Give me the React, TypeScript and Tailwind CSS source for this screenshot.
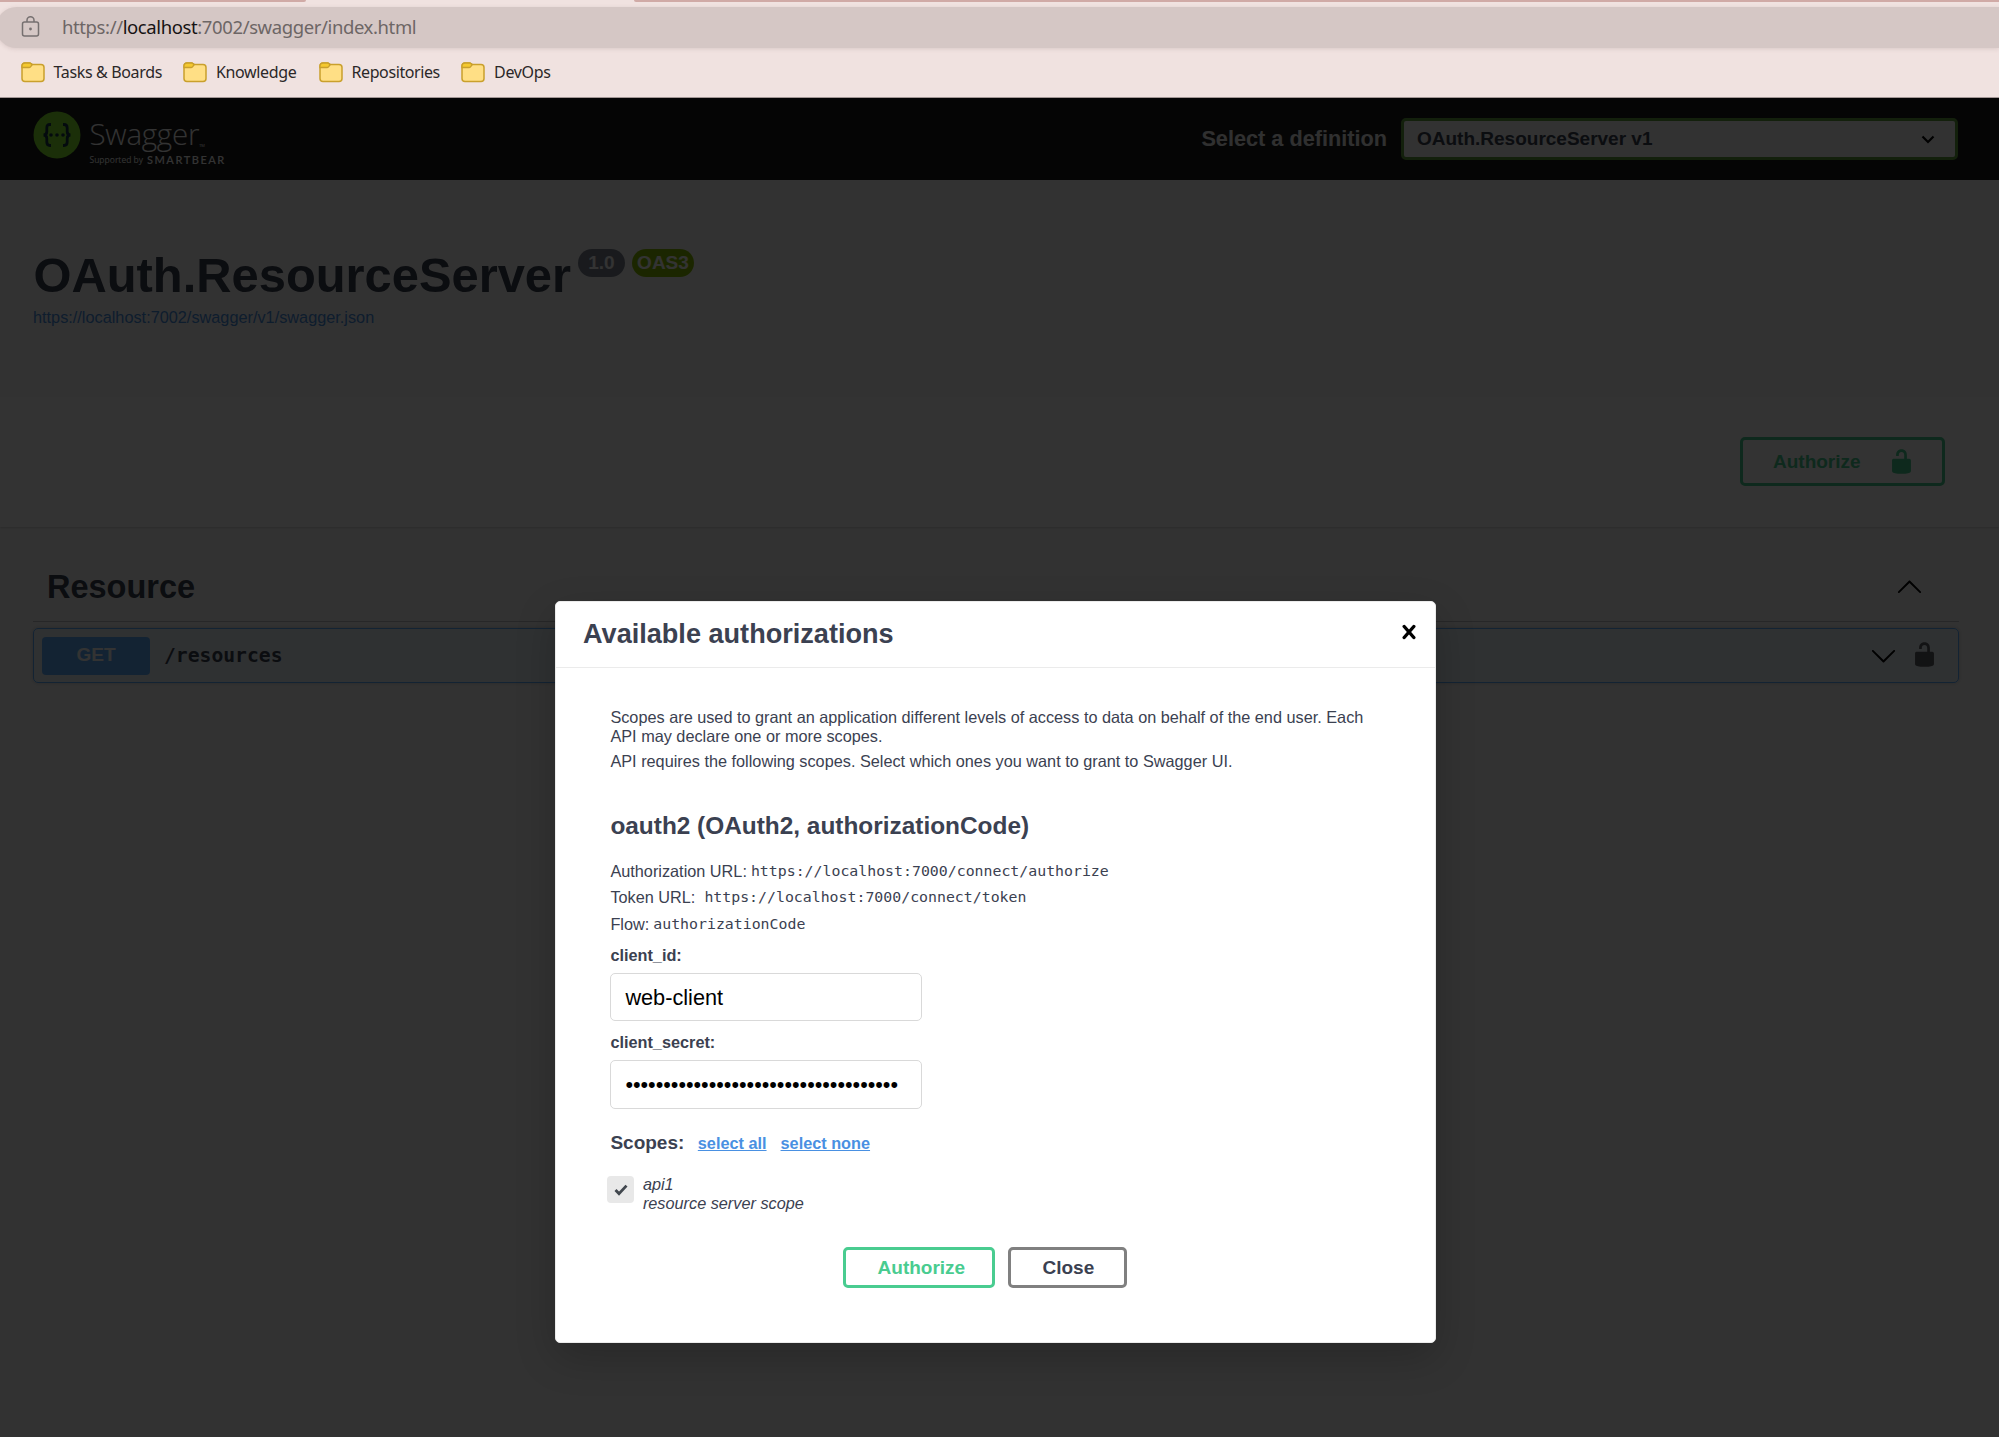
import React from "react";

const bookmarks = [
  { name: "Tasks & Boards", cls: "w-[108px] tracking-[-0.35px]" },
  { name: "Knowledge", cls: "w-[81px] tracking-[-0.35px]" },
  { name: "Repositories", cls: "w-[88px] tracking-[-0.4px]" },
  { name: "DevOps", cls: "w-[58px] tracking-[-0.3px]" },
];

function Folder() {
  return (
    <svg width="24" height="21" viewBox="0 0 24 21" className="shrink-0">
      <path d="M1 4a3 3 0 0 1 3-3h4.500a2 2 0 0 1 1.500 0.700L11.500 2.500H20a3 3 0 0 1 3 3v11a3 3 0 0 1-3 3H4a3 3 0 0 1-3-3z" fill="#ffdf85" stroke="#c9a02c" strokeWidth="1.500" />
      <path d="M1 4a3 3 0 0 1 3-3h4.500a2 2 0 0 1 1.500 0.700L11 3 9.500 4.800A2 2 0 0 1 8 5.500H1z" fill="#f5c92f" stroke="#c9a02c" strokeWidth="1.300" />
    </svg>
  );
}

function Unlock({ color }: { color: string }) {
  return (
    <svg width="27" height="27" viewBox="0 0 20 20" fill={color} className="shrink-0">
      <path d="M15.800 8H14V5.600C14 2.703 12.665 1 10 1 7.334 1 6 2.703 6 5.600V6h2v-.801C8 3.754 8.797 3 10 3c1.203 0 2 .754 2 2.199V8H4c-.553 0-1 .646-1 1.199V17c0 .549.428 1.139.951 1.307l1.197.387C5.672 18.861 6.550 19 7.100 19h5.800c.549 0 1.428-.139 1.951-.307l1.196-.387c.524-.167.953-.757.953-1.306V9.199C17 8.646 16.352 8 15.800 8z" />
    </svg>
  );
}

function Chevron({ up = false }: { up?: boolean }) {
  return (
    <svg width="27" height="27" viewBox="0 0 20 20" className={up ? "mb-[2px] rotate-180" : ""}>
      <path d="M17.418 6.109c.272-.268.709-.268.979 0s.271.701 0 .969l-7.908 7.830c-.270.268-.707.268-.979 0l-7.908-7.830c-.270-.268-.270-.701 0-.969s.709-.268.979 0L10 13.250l7.418-7.141z" />
    </svg>
  );
}

function BrowserChrome() {
  return (
    <div className="h-[98px] shrink-0 overflow-hidden border-b border-[#a39796] bg-[#f0e2e0] font-['Noto_Sans',sans-serif]">
      <div className="flex h-[7px] items-start justify-between">
        <div className="h-[2px] w-[306px] rounded-br bg-[#d0aaa6]" />
        <div className="h-[2px] w-[1365px] rounded-bl bg-[#d0aaa6]" />
      </div>
      <div className="-ml-1 flex h-[41px] items-center rounded-l-full bg-[#d5c7c5] pl-[25px] shadow-[0_1px_4px_rgba(120,90,90,0.18)]">
        <svg width="19" height="22" viewBox="0 0 19 22" fill="none" stroke="#767070" strokeWidth="1.500" className="mb-[2px]">
          <rect x="1.500" y="6" width="16" height="14" rx="2" />
          <path d="M6 6V4.300a3.500 3.500 0 0 1 7 0V6" />
          <circle cx="9.500" cy="13" r="1.400" fill="#767070" stroke="none" />
        </svg>
        <div className="mb-[2px] ml-[22px] whitespace-nowrap text-[18.500px] leading-6 tracking-[-0.39px] text-[#6d6665]">
          https://<span className="text-[#151313]">localhost</span>:7002/swagger/index.html
        </div>
      </div>
      <div className="flex h-[48px] items-center pl-[20.500px]">
        {bookmarks.map((b) => (
          <div key={b.name} className="mr-[21.500px] flex items-center">
            <Folder />
            <span className={`ml-[9px] whitespace-nowrap text-[16px] text-[#2b2828] ${b.cls}`}>{b.name}</span>
          </div>
        ))}
      </div>
    </div>
  );
}

function Logo() {
  return (
    <div className="flex pt-[13px]">
      <svg width="48" height="48" viewBox="0 0 48 48" className="shrink-0">
        <circle cx="24" cy="24" r="23.500" fill="#85ea2d" />
        <g fill="none" stroke="#173647" strokeWidth="2.800">
          <path d="M18 13.500h-1c-2.300 0-3.200 1-3.200 3.500v3.500c0 2.200-1 3.500-3.300 3.500 2.300 0 3.300 1.300 3.300 3.500V31c0 2.500.9 3.500 3.200 3.500h1" />
          <path d="M30 13.500h1c2.300 0 3.200 1 3.200 3.500v3.500c0 2.200 1 3.500 3.300 3.500-2.300 0-3.300 1.300-3.300 3.500V31c0 2.500-.9 3.500-3.200 3.500h-1" />
        </g>
        <g fill="#173647">
          <circle cx="18" cy="24" r="1.800" />
          <circle cx="24" cy="24" r="1.800" />
          <circle cx="30" cy="24" r="1.800" />
        </g>
      </svg>
      <div className="ml-[8.500px] whitespace-nowrap font-['Open_Sans',sans-serif] text-white">
        <div className="flex h-[42px] items-end">
          <span className="text-[29.500px] font-light leading-[38px] tracking-[-0.25px]">Swagger</span>
          <span className="mb-[4px] text-[4px] leading-[6px]">TM</span>
        </div>
        <div className="mt-px flex items-center leading-[12px]">
          <span className="text-[8.500px]">Supported by</span>
          <span className="ml-[4px] font-['Lato',sans-serif] text-[11px] font-semibold tracking-[1.5px]">SMARTBEAR</span>
        </div>
      </div>
    </div>
  );
}

function Page() {
  return (
    <div className="flex h-full flex-col bg-[#fafafa] text-[#3b4151]">
      <header className="flex h-[82px] shrink-0 justify-between bg-[#1b1b1b] pl-[33px] pr-[41px]">
        <Logo />
        <div className="flex items-start pt-[20px]">
          <span className="mr-[14px] mt-[7px] text-[21.700px] font-bold leading-[28px] text-[#f0f0f0]">Select a definition</span>
          <div className="flex h-[42px] w-[557px] items-center justify-between rounded-[5px] border-[3px] border-[#62a03f] bg-[#f7f7f7] pl-[13px] pr-[20px] text-[19px] font-bold">
            <span>OAuth.ResourceServer v1</span>
            <svg width="14" height="9" viewBox="0 0 14 9" fill="none" stroke="#000" strokeWidth="2.200">
              <path d="M1.500 1.500L7 7l5.500-5.500" />
            </svg>
          </div>
        </div>
      </header>
      <section className="flex h-[217px] shrink-0 flex-col pl-[33px] pt-[67px]">
        <div className="flex items-start">
          <h1 className="pl-[0.500px] text-[48.850px] font-bold leading-[56px]">OAuth.ResourceServer</h1>
          <div className="ml-[7px] mt-[2px] flex gap-[7px] text-[19px] font-bold leading-[28px] text-white">
            <span className="w-[47px] rounded-full bg-[#7d8492] text-center">1.0</span>
            <span className="w-[62px] rounded-full bg-[#89bf04] text-center">OAS3</span>
          </div>
        </div>
        <a className="mt-[5px] text-[16.300px] leading-[19px] text-[#4990e2]">https://localhost:7002/swagger/v1/swagger.json</a>
      </section>
      <section className="flex h-[130px] shrink-0 justify-end bg-white pr-[54px] pt-[40px] shadow-[0_1px_2px_rgba(0,0,0,0.15)]">
        <div className="flex h-[49px] w-[205px] items-center rounded-[5px] border-[3px] border-[#49cc90] pl-[30px] text-[19px] font-bold text-[#49cc90]">
          <span className="mt-[2px] w-[115px]">Authorize</span>
          <Unlock color="#49cc90" />
        </div>
      </section>
      <section className="pl-[33px] pr-[40px] pt-[28px]">
        <div className="flex h-[67px] items-center justify-between border-b border-[#3b4151]/30 pl-[14px] pr-[36px]">
          <h2 className="mb-[2px] text-[32.500px] font-bold leading-[40px]">Resource</h2>
          <Chevron up />
        </div>
        <div className="mt-[6px] flex h-[55px] items-center rounded-[5px] border border-[#61affe] bg-[#61affe]/10 pl-[8px] pr-[20px] shadow-[0_0_4px_rgba(0,0,0,0.19)]">
          <span className="flex h-[38px] w-[108px] items-center justify-center rounded-[4px] bg-[#61affe] text-[19px] font-bold text-white">GET</span>
          <span className="ml-[14px] flex-1 font-['DejaVu_Sans_Mono',monospace] text-[19.700px] font-bold">/resources</span>
          <Chevron />
          <span className="mb-[3px] ml-[14px] opacity-60">
            <Unlock color="#000" />
          </span>
        </div>
      </section>
    </div>
  );
}

function Modal() {
  return (
    <div className="mt-[503px] h-[742px] w-[881px] rounded-[5px] border border-[#ebebeb] bg-white text-[16.270px] leading-[19px] text-[#3b4151] shadow-[0_14px_40px_rgba(0,0,0,0.2)]">
      <div className="flex h-[66px] items-center justify-between border-b border-[#ebebeb] pl-[27px] pr-[19px]">
        <h3 className="mb-[2px] text-[27.100px] font-bold">Available authorizations</h3>
        <svg width="14" height="16" viewBox="0 0 14 16" fill="none" stroke="#000" strokeWidth="3.400" strokeLinecap="round" className="mb-[5px]">
          <path d="M2.200 2.500l9.600 11M11.800 2.500l-9.600 11" />
        </svg>
      </div>
      <div className="pl-[54.400px] pr-[53px] pt-[40px]">
        <p>Scopes are used to grant an application different levels of access to data on behalf of the end user. Each API may declare one or more scopes.</p>
        <p className="mt-[6px]">API requires the following scopes. Select which ones you want to grant to Swagger UI.</p>
        <h4 className="mt-[40px] text-[24.400px] font-bold leading-[30px]">oauth2 (OAuth2, authorizationCode)</h4>
        <p className="mt-[21px] flex">
          Authorization URL:<code className="ml-[4px] font-['DejaVu_Sans_Mono',monospace] text-[14.860px]">https://localhost:7000/connect/authorize</code>
        </p>
        <p className="mt-[7px] flex">
          Token URL:<code className="ml-[9px] font-['DejaVu_Sans_Mono',monospace] text-[14.860px]">https://localhost:7000/connect/token</code>
        </p>
        <p className="mt-[8px] flex">
          Flow:<code className="ml-[4px] font-['DejaVu_Sans_Mono',monospace] text-[14.860px]">authorizationCode</code>
        </p>
        <p className="mt-[12px] font-bold">client_id:</p>
        <div className="mt-[8px] flex h-[48px] w-[312px] items-center rounded-[5px] border border-[#d9d9d9] pl-[14px] text-[21.700px] text-black">web-client</div>
        <p className="mt-[12px] font-bold">client_secret:</p>
        <div className="mt-[8px] flex h-[49px] w-[312px] items-center rounded-[5px] border border-[#d9d9d9] pb-px pl-[14px] text-[21.700px] tracking-[-0.020px] text-black">••••••••••••••••••••••••••••••••••••</div>
        <div className="mt-[24px] flex items-baseline font-bold">
          <span className="text-[19px]">Scopes:</span>
          <a className="ml-[13.500px] text-[#4990e2] underline">select all</a>
          <a className="ml-[14px] text-[#4990e2] underline">select none</a>
        </div>
        <div className="-ml-[3px] mt-[22px] flex italic">
          <span className="mt-px flex h-[27px] w-[27px] items-center justify-center rounded-[4px] bg-[#e8e8e8]">
            <svg width="14" height="12" viewBox="0 0 14 12" fill="none" stroke="#41474e" strokeWidth="2.800" className="ml-px mt-px">
              <path d="M1.500 6l3.500 3.600L12.500 1.600" />
            </svg>
          </span>
          <div className="ml-[8.500px]">
            <p>api1</p>
            <p>resource server scope</p>
          </div>
        </div>
        <div className="mt-[34px] flex gap-[13px] pl-[233px] text-[19px] font-bold">
          <div className="flex h-[41px] w-[152px] items-center justify-center rounded-[5px] border-[3px] border-[#49cc90] pl-[4px] text-[#49cc90]">Authorize</div>
          <div className="flex h-[41px] w-[119px] items-center justify-center rounded-[5px] border-[3px] border-[#808080] pl-px">Close</div>
        </div>
      </div>
    </div>
  );
}

export default function App() {
  return (
    <div className="flex h-[1437px] w-[1999px] flex-col overflow-hidden font-['Liberation_Sans',sans-serif]">
      <BrowserChrome />
      <main className="relative min-h-0 flex-1">
        <Page />
        <div className="absolute inset-0 flex items-start bg-black/80 pl-[555px]">
          <Modal />
        </div>
      </main>
    </div>
  );
}
